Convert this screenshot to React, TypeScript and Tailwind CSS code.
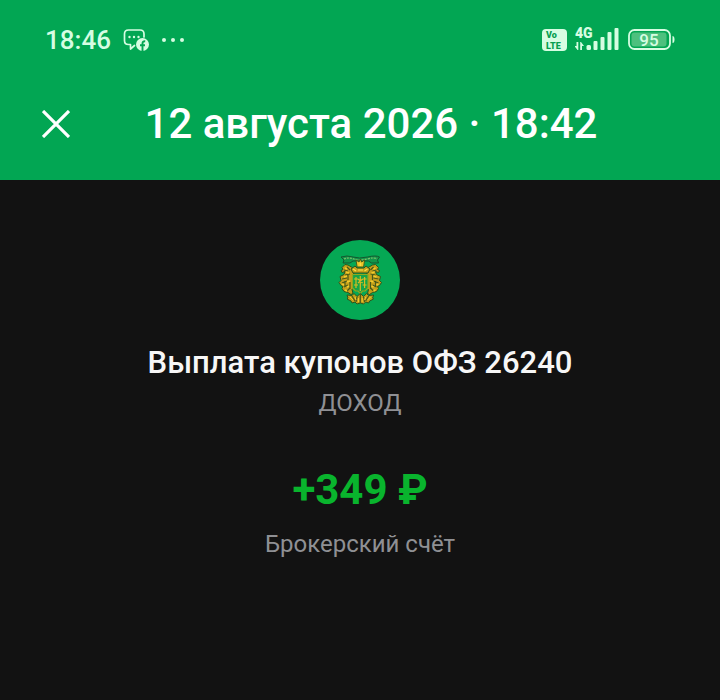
import { FC, ReactNode } from "react";
import classNames from "clsx";

const App: FC = () => (
  <div
    className={classNames(
      "min-h-screen w-full",
      "bg-[#121212]",
      "font-['Roboto','Noto_Sans',sans-serif]",
    )}
  >
    <header className="bg-[#02a653] pb-3">
      <StatusBar />

      <div className="flex h-22 items-center pl-9 pr-[54px]">
        <button
          type="button"
          aria-label="Закрыть"
          className="flex h-10 w-10 items-center justify-center text-white"
        >
          <CloseIcon />
        </button>
        <h1 className="flex-1 whitespace-nowrap text-center text-[42px] leading-12 font-medium text-white">
          12 августа 2026 · 18:42
        </h1>
      </div>
    </header>

    <main className="flex flex-col items-center px-6 pt-15 pb-12 text-center">
      <Emblem />

      <h2 className="mt-[25px] text-[31px] leading-9 font-medium text-[#f7f7f7]">
        Выплата купонов ОФЗ 26240
      </h2>
      <Caption className="mt-[6px]">ДОХОД</Caption>

      <p className="mt-[47px] text-[42px] leading-12 font-bold text-[#09b42d]">
        +349 ₽
      </p>
      <Caption className="mt-[14px]">Брокерский счёт</Caption>
    </main>
  </div>
);

export default App;

type CaptionProps = {
  className?: string;
  children: ReactNode;
};

const Caption: FC<CaptionProps> = ({ className, children }) => (
  <p className={classNames("text-2xl leading-8 text-[#8f9094]", className)}>
    {children}
  </p>
);

const StatusBar: FC = () => (
  <div className="flex h-20 items-center pl-[45px] pr-11 text-[#d6fde2]">
    <span className="text-[26px] leading-8 font-medium">18:46</span>
    <ChatIcon />
    <svg viewBox="0 0 24 6" className="ml-3 h-[6px] w-6" fill="currentColor">
      <circle cx="3" cy="3" r="2" />
      <circle cx="12" cy="3" r="2" />
      <circle cx="21" cy="3" r="2" />
    </svg>

    <div className="ml-auto flex items-center">
      <VolteIcon />
      <SignalIcon />
      <BatteryIcon level={95} />
    </div>
  </div>
);

const ChatIcon: FC = () => (
  <svg viewBox="0 0 26 24" className="ml-3 h-6 w-[26px]" fill="none">
    <path
      d="M11.5 17.5 7.5 21v-4.500H5.500Q1.500 16.500 1.500 12.500V6Q1.500 2 5.500 2H17Q21 2 21 6v3"
      stroke="currentColor"
      strokeWidth="1.700"
      strokeLinejoin="round"
      strokeLinecap="round"
    />
    <g fill="currentColor">
      <circle cx="6.500" cy="9" r="1.200" />
      <circle cx="11" cy="9" r="1.200" />
      <circle cx="15.500" cy="9" r="1.200" />
      <circle cx="19.500" cy="16.500" r="6.500" />
    </g>
    <path
      d="M19.5 23v-7.500q0-2.500 2.700-2.300M17 17.300h5"
      stroke="#02a653"
      strokeWidth="1.900"
    />
  </svg>
);

const VolteIcon: FC = () => (
  <svg viewBox="0 0 25 22" className="h-[22px] w-[25px]">
    <rect width="25" height="22" rx="4" fill="currentColor" />
    <g fill="#079f50" fontSize="9" fontWeight="900">
      <text x="4" y="9">
        Vo
      </text>
      <text x="4" y="20">
        LTE
      </text>
    </g>
  </svg>
);

const SignalIcon: FC = () => (
  <svg viewBox="0 0 45 28" className="ml-2 h-7 w-[45px]" fill="currentColor">
    <text x="0" y="12" fontSize="14" fontWeight="900">
      4G
    </text>
    <path d="M1.500 16h1.800v8H2.500L-.500 20h2zM7 24h-1.800v-8H6L9 20H7z" />
    <rect x="11.500" y="19" width="4.500" height="5" rx="1.500" />
    <rect x="18.500" y="15" width="4" height="9" rx="1" />
    <rect x="25.500" y="11" width="4" height="13" rx="1" />
    <rect x="32.500" y="6" width="4" height="18" rx="1" />
    <rect x="39.500" y="2" width="4" height="22" rx="1" />
  </svg>
);

const BatteryIcon: FC<{ level: number }> = ({ level }) => (
  <svg viewBox="0 0 48 22" className="ml-2 h-[22px] w-12">
    <rect
      x="1"
      y="1"
      width="41"
      height="19"
      rx="5.500"
      fill="none"
      stroke="currentColor"
      strokeWidth="1.800"
    />
    <rect x="3.500" y="3.500" width="35" height="14" rx="3" fill="#4dc07e" />
    <path d="M44.500 7q2 0 2 3.500t-2 3.500z" fill="currentColor" />
    <text
      x="21"
      y="17"
      fill="currentColor"
      fontSize="17"
      fontWeight="500"
      textAnchor="middle"
    >
      {level}
    </text>
  </svg>
);

const CloseIcon: FC = () => (
  <svg viewBox="0 0 28 28" className="h-7 w-7" fill="none">
    <path
      d="M1 1l26 26M27 1l-26 26"
      stroke="currentColor"
      strokeWidth="3.200"
    />
  </svg>
);

// One supporter of the coat of arms, mirrored for the right side
const Supporter: FC = () => (
  <>
    <path
      d="M28 25l-3-.5-3 3 1 2-2 1 1 2 3-1-1 3-4 2 1 4-2 2 2 3 2 1-1 2 2 3 4 1 3 2 2-1-1-4 2-2-1-5 1-4-1-4 2-3-1-3z"
      fill="#c4a01b"
      stroke="#2b551e"
      strokeWidth="1"
    />
    <path
      d="M24 30l4 1M27 27l3 3M25 35l5-1M22 39l5-1M22 43l5-2M24 47l4-2M27 51l3-3M28 34v6M25 41v6M30 42v7"
      stroke="#46581a"
      strokeWidth="1.200"
    />
    <path
      d="M25 28l2 1M26 32l3 1M24 37l3-1M27 42l3-1M22 44l2 1M27 47l2-1M25 50l2 1"
      stroke="#f3cc2c"
      strokeWidth="1.500"
    />
  </>
);

const Emblem: FC = () => (
  <svg
    viewBox="0 0 80 80"
    className="h-20 w-20"
    fill="none"
    role="img"
    aria-label="ОФЗ 26240"
  >
    <circle cx="40" cy="40" r="40" fill="#05a854" />

    <path
      d="M21 17q6-2 12 0t14.500 0 12 0l-2 3 1 3h-7l-3-2H33l-3 2h-7l1-3z"
      fill="#12964a"
      stroke="#14572f"
      strokeWidth="1"
    />
    <path
      d="M24 19q5-2 10 0t13 0 10 0"
      stroke="#7fbd68"
      strokeWidth="1.200"
      strokeDasharray="2 1"
    />

    <Supporter />
    <g transform="translate(80.500 0) scale(-1 1)">
      <Supporter />
    </g>

    <path
      d="M31 29l4-3 2 2h7l2-2 4 3-2 4H33z"
      fill="#c4a01b"
      stroke="#2b551e"
      strokeWidth="1"
    />
    <path
      d="M36 20l3 2 1.300-3 1.300 3 3-2-1 7h-6.500z"
      fill="#edc629"
      stroke="#405c19"
      strokeWidth="1"
    />
    <path
      d="M33 29l3 2M47.500 29l-3 2M38 30h5M40.300 23v3"
      stroke="#fbe04a"
      strokeWidth="1.200"
    />

    <path
      d="M32.500 34.500h15.500V48l-3 3h-2.500l-2.200 2.500L38 51h-2.500l-3-3z"
      fill="#16a447"
      stroke="#8fa820"
      strokeWidth="1.200"
    />
    <path
      d="M36 37v11M40.300 36v15M44.600 37v11M34 39h4M42.600 39h4M34 45h4M42.600 45h4M38 39l4.600 4M42.600 39L38 43"
      stroke="#d8bb24"
      strokeWidth="1.200"
    />

    <path
      d="M27 55l5 .5 2-2 3 3 3.300-3 3.300 3 3-3 2 2 5-.5-1 3 1 1-4 2-1 2-3-1-2 2-3.300-1-3.300 1-2-2-3 1-1-2-4-2 1-1z"
      fill="#c4a01b"
      stroke="#2b551e"
      strokeWidth="1"
    />
    <path
      d="M32 56l3 5M37 57l-1 5M40.300 54v9M43.600 57l1 5M48.600 56l-3 5"
      stroke="#46581a"
      strokeWidth="1.200"
    />
    <path
      d="M30 57l3 3M35 57l1 3M38.500 58v4M42.200 58v4M45.600 57l-1 3M50.600 57l-3 3"
      stroke="#f4cb2a"
      strokeWidth="1"
    />
  </svg>
);
